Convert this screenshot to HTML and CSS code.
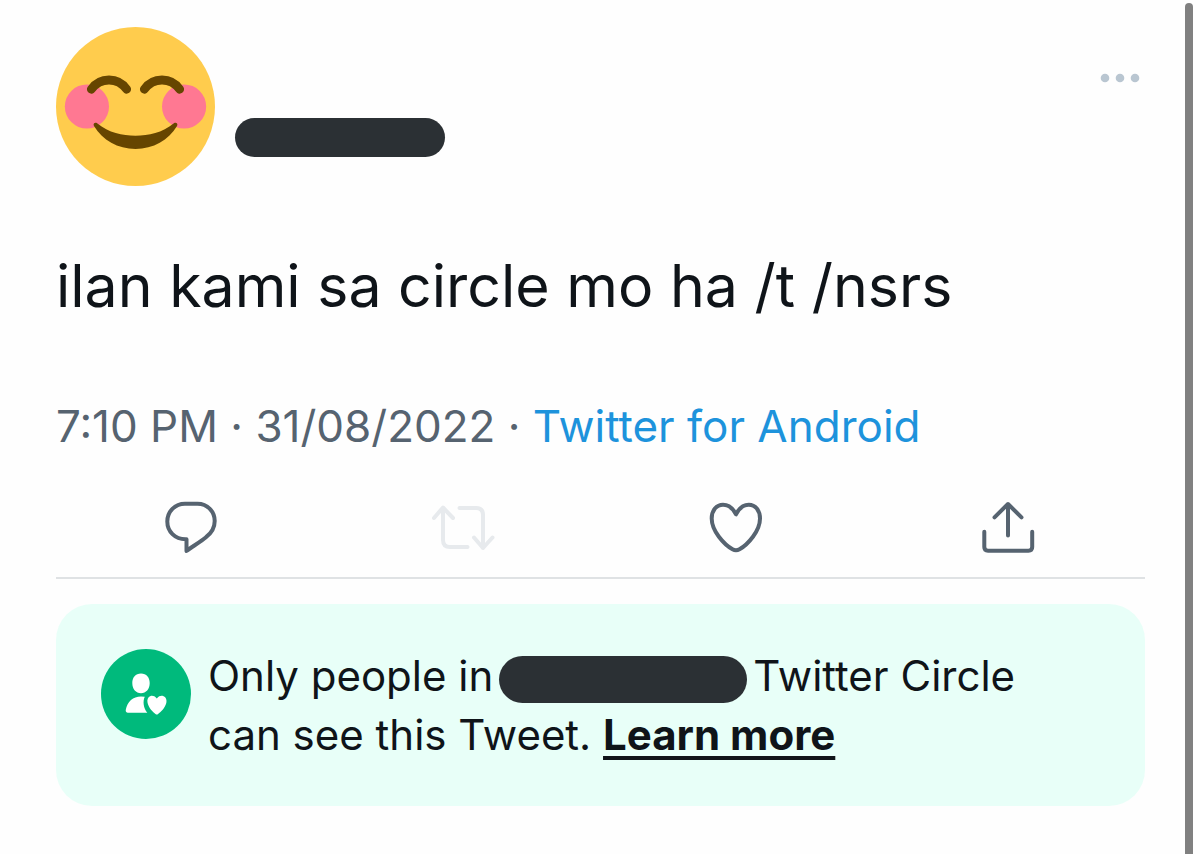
FILE: index.html
```html
<!DOCTYPE html>
<html lang="en">
  <head>
    <meta charset="UTF-8" />
    <meta name="viewport" content="width=device-width, initial-scale=1.0" />
    <title>Tweet</title>
    <link rel="stylesheet" href="styles.css">
  </head>
  <body>
    <main class="tweet">
      <!-- Author row -->
      <header class="tweet-header">
        <svg class="avatar" viewBox="0 0 36 36" role="img" aria-label="Avatar">
          <circle cx="18" cy="18" r="18" fill="#ffcc4d" />
          <circle cx="7" cy="18" r="5" fill="#ff7892" />
          <circle cx="29" cy="18" r="5" fill="#ff7892" />
          <path
            d="M8 14.1C10 11.3 14 11.3 16 14.1M20 14.1C22 11.3 26 11.3 28 14.1"
            fill="none"
            stroke="#664500"
            stroke-width="2"
            stroke-linecap="round"
          />
          <path
            d="M9.3 21.8C12 24 15 24.6 18 24.6S24 24 26.7 21.8C27.2 21.5 27.7 21.9 27.4 22.4C25.5 25.6 22 27.6 18 27.6S10.5 25.6 8.6 22.4C8.3 21.9 8.8 21.5 9.3 21.8Z"
            fill="#664500"
          />
        </svg>
        <span class="hidden-name"></span>
        <button class="icon-button more" aria-label="More">
          <svg viewBox="0 0 40 12">
            <circle cx="5" cy="6" r="4.3" />
            <circle cx="20" cy="6" r="4.3" />
            <circle cx="35" cy="6" r="4.3" />
          </svg>
        </button>
      </header>

      <p class="tweet-text">ilan kami sa circle mo ha /t /nsrs</p>

      <p class="tweet-meta">
        7:10 PM · 31/08/2022 · <a href="#">Twitter for Android</a>
      </p>

      <!-- Actions -->
      <div class="actions">
        <button class="icon-button" aria-label="Reply">
          <svg viewBox="0 0 64 64">
            <path d="M26.5 55V43.2H25.5C15 43.2 7.3 35.5 7.3 25.5S15 7.7 25 7.7H37.5C47.5 7.7 54.7 15.5 54.7 25C54.7 32 51.5 37 46 41.2C42 44.5 32 51 26.5 55Z" />
          </svg>
        </button>
        <button class="icon-button" aria-label="Retweet" disabled>
          <svg viewBox="0 0 64 64">
            <path d="M2 22L11 11.5L21 22M11 12V44Q11 51 18 51H35.5M27.5 12H44Q51 12 51 19V52M42 41.5L51 52L60.5 41.5" />
          </svg>
        </button>
        <button class="icon-button" aria-label="Like">
          <svg viewBox="0 0 64 64">
            <path d="M31 18.3C27.5 11.5 23 8.7 18 8.7C11.5 8.7 6.7 14.5 6.7 22.5C6.7 35 19 48.5 27.5 53.3Q31 55.3 34.5 53.3C43 48.5 55 35 55 22.5C55 14.5 50.3 8.7 43.8 8.7C38.8 8.7 34.5 11.5 31 18.3Z" />
          </svg>
        </button>
        <button class="icon-button" aria-label="Share">
          <svg viewBox="0 0 64 64">
            <path d="M17.5 21.3L31 8L44.5 21.3M31 8.5V39.5M7.3 35.8V51Q7.3 54.7 11 54.7H51.5Q55.2 54.7 55.2 51V35.8" />
          </svg>
        </button>
      </div>

      <!-- Circle notice -->
      <section class="notice">
        <svg class="notice-icon" viewBox="0 0 90 90" aria-hidden="true">
          <circle cx="45" cy="45" r="45" fill="#00ba7c" />
          <path
            d="M40 24.5C45.5 24.5 48.7 28.5 48.7 34C48.7 40 45 44.3 40 44.3S31.3 40 31.3 34C31.3 28.5 34.5 24.5 40 24.5ZM43.8 47.7C41.5 52.5 42.5 59 46.3 63.7H27C25.2 63.7 24.4 62.5 24.8 60.8C26.4 52.5 32 47.4 40 47.4Q42 47.4 43.8 47.7Z"
            fill="#fff"
          />
          <path
            d="M55.8 49.5C53.8 46.9 51.4 46.5 49.6 47C46.8 47.9 45.8 50.9 46.6 54C47.8 59 51.8 63 54.8 65.2Q55.8 65.9 56.8 65.2C59.8 63 64 59 65.3 54C66.1 50.9 64.9 47.9 62.1 47C60.2 46.5 57.8 46.9 55.8 49.5Z"
            fill="#fff"
          />
        </svg>
        <p class="notice-text">
          Only people in<span class="hidden-owner"></span>Twitter Circle<br />
          can see this Tweet. <a href="#">Learn more</a>
        </p>
      </section>
    </main>
    <div class="scroll-thumb"></div>
  </body>
</html>
```
FILE: styles.css
```css
* {
  box-sizing: border-box;
}
body {
  display: flex;
  min-height: 100vh;
  margin: 0;
  background-color: #fefefe;
  color: #0f1419;
  font-family: Inter, "Liberation Sans", sans-serif;
}
.tweet {
  flex: 1;
  padding: 27px 40px 48px 56px;
}
.tweet-header {
  display: flex;
  align-items: flex-start;
  gap: 20px;
}
.avatar {
  width: 159px;
  height: 159px;
}
.hidden-name {
  width: 210px;
  height: 39px;
  margin-top: 91px;
  border-radius: 20px;
  background-color: #2b3034;
}
.icon-button {
  padding: 0;
  border: none;
  background: none;
  color: #566370;
  cursor: pointer;
}
.icon-button svg {
  display: block;
  width: 64px;
  height: 64px;
  fill: none;
  stroke: currentColor;
  stroke-width: 4;
  stroke-linecap: round;
  stroke-linejoin: round;
}
.icon-button:disabled {
  color: #e7eaed;
  cursor: default;
}
.more {
  margin: 45px 5px 0 auto;
  color: #b9c6d1;
}
.more svg {
  width: 40px;
  height: 12px;
  fill: currentColor;
  stroke: none;
}
.tweet-text {
  margin: 62px 0 0;
  font-size: 59px;
  font-weight: 400;
  line-height: 76px;
}
.tweet-meta {
  margin: 72px 0 0;
  color: #566370;
  font-size: 44px;
  line-height: 60px;
}
.tweet-meta a {
  color: #1d93dc;
  text-decoration: none;
}
.actions {
  display: grid;
  grid-template-columns: repeat(4, 1fr);
  justify-items: center;
  margin-top: 40px;
  padding-bottom: 17px;
  border-bottom: 2px solid #dfe2e4;
}
.notice {
  display: flex;
  align-items: flex-start;
  gap: 17px;
  margin-top: 25px;
  padding: 42px 45px;
  border-radius: 36px;
  background-color: #e8fff8;
}
.notice-icon {
  flex: none;
  width: 90px;
  height: 90px;
  margin-top: 3px;
}
.notice-text {
  margin: 0;
  font-size: 42px;
  line-height: 59px;
}
.notice-text a {
  color: inherit;
  font-weight: 700;
  text-decoration-thickness: 4px;
  text-underline-offset: 6px;
}
.hidden-owner {
  display: inline-block;
  width: 248px;
  height: 47px;
  margin: 0 6px;
  border-radius: 24px;
  background-color: #2b3034;
  vertical-align: middle;
}
.scroll-thumb {
  width: 8px;
  margin: 3px 7px 0 0;
  border-radius: 4px 4px 0 0;
  background-color: #808080;
}
```
